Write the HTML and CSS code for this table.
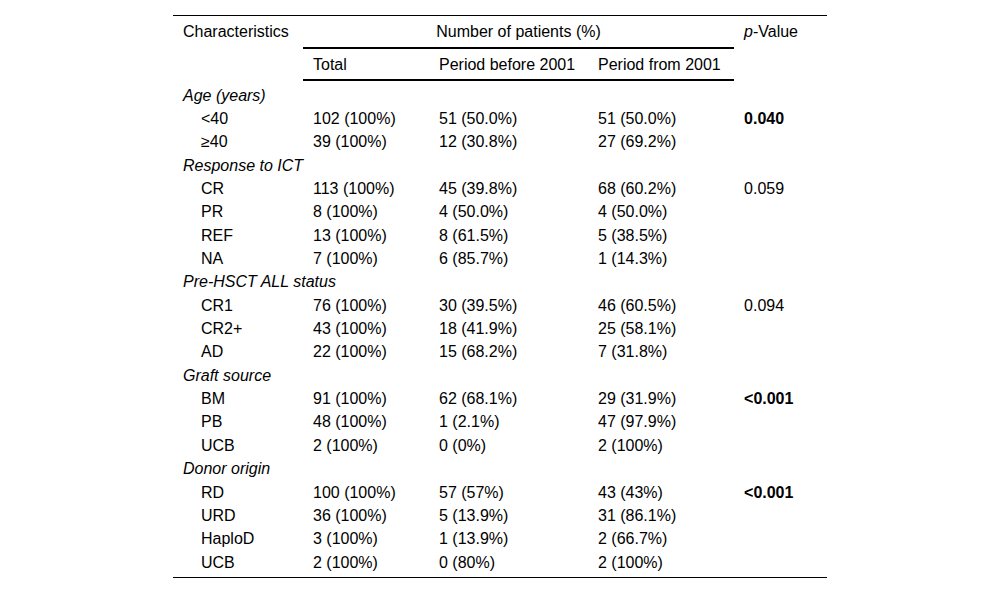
FILE: index.html
```html
<!DOCTYPE html>
<html>
<head>
<meta charset="utf-8">
<link rel="stylesheet" href="styles.css">
</head>
<body>
<div class="wrap">
<table class="tbl">
<colgroup>
<col class="c1"><col class="c2"><col class="c3"><col class="c4"><col class="c5">
</colgroup>
<thead>
<tr class="h1">
<th rowspan="2" class="top">Characteristics</th>
<th colspan="3" class="span">Number of patients (%)</th>
<th rowspan="2" class="top"><i>p</i>-Value</th>
</tr>
<tr class="h2">
<th>Total</th><th>Period before 2001</th><th>Period from 2001</th>
</tr>
</thead>
<tbody>
<tr class="first"><td class="grp" colspan="5">Age (years)</td></tr>
<tr><td class="ind">&lt;40</td><td>102 (100%)</td><td>51 (50.0%)</td><td>51 (50.0%)</td><td><b>0.040</b></td></tr>
<tr><td class="ind">≥40</td><td>39 (100%)</td><td>12 (30.8%)</td><td>27 (69.2%)</td><td></td></tr>
<tr><td class="grp" colspan="5">Response to ICT</td></tr>
<tr><td class="ind">CR</td><td>113 (100%)</td><td>45 (39.8%)</td><td>68 (60.2%)</td><td>0.059</td></tr>
<tr><td class="ind">PR</td><td>8 (100%)</td><td>4 (50.0%)</td><td>4 (50.0%)</td><td></td></tr>
<tr><td class="ind">REF</td><td>13 (100%)</td><td>8 (61.5%)</td><td>5 (38.5%)</td><td></td></tr>
<tr><td class="ind">NA</td><td>7 (100%)</td><td>6 (85.7%)</td><td>1 (14.3%)</td><td></td></tr>
<tr><td class="grp" colspan="5">Pre-HSCT ALL status</td></tr>
<tr><td class="ind">CR1</td><td>76 (100%)</td><td>30 (39.5%)</td><td>46 (60.5%)</td><td>0.094</td></tr>
<tr><td class="ind">CR2+</td><td>43 (100%)</td><td>18 (41.9%)</td><td>25 (58.1%)</td><td></td></tr>
<tr><td class="ind">AD</td><td>22 (100%)</td><td>15 (68.2%)</td><td>7 (31.8%)</td><td></td></tr>
<tr><td class="grp" colspan="5">Graft source</td></tr>
<tr><td class="ind">BM</td><td>91 (100%)</td><td>62 (68.1%)</td><td>29 (31.9%)</td><td><b>&lt;0.001</b></td></tr>
<tr><td class="ind">PB</td><td>48 (100%)</td><td>1 (2.1%)</td><td>47 (97.9%)</td><td></td></tr>
<tr><td class="ind">UCB</td><td>2 (100%)</td><td>0 (0%)</td><td>2 (100%)</td><td></td></tr>
<tr><td class="grp" colspan="5">Donor origin</td></tr>
<tr><td class="ind">RD</td><td>100 (100%)</td><td>57 (57%)</td><td>43 (43%)</td><td><b>&lt;0.001</b></td></tr>
<tr><td class="ind">URD</td><td>36 (100%)</td><td>5 (13.9%)</td><td>31 (86.1%)</td><td></td></tr>
<tr><td class="ind">HaploD</td><td>3 (100%)</td><td>1 (13.9%)</td><td>2 (66.7%)</td><td></td></tr>
<tr class="last"><td class="ind">UCB</td><td>2 (100%)</td><td>0 (80%)</td><td>2 (100%)</td><td></td></tr>
</tbody>
</table>
</div>
</body>
</html>
```
FILE: styles.css
```css
html, body {
  margin: 0;
  padding: 0;
  background: #fff;
}
body {
  font-family: "Liberation Sans", Arial, sans-serif;
  font-size: 16px;
  color: #000;
}
.wrap {
  padding-top: 15px;
  display: flex;
  justify-content: flex-start;
  padding-left: 173px;
}
.tbl {
  border-collapse: collapse;
  table-layout: fixed;
  width: 654px;
  border-top: 1px solid #000;
  border-bottom: 1px solid #000;
}
.c1 { width: 130px; }
.c2 { width: 126px; }
.c3 { width: 159px; }
.c4 { width: 146px; }
.c5 { width: 93px; }
th {
  font-weight: normal;
  text-align: left;
  padding: 0 0 0 10px;
  white-space: nowrap;
  line-height: 16px;
}
.h1 th {
  height: 31px;
  vertical-align: middle;
}
.h1 th.top {
  vertical-align: top;
  padding-top: 8px;
}
.h1 th.span {
  text-align: center;
  padding: 0;
  border-bottom: 2px solid #000;
}
.h2 th {
  height: 28px;
  padding-top: 2px;
  border-bottom: 2px solid #000;
  vertical-align: middle;
}
td {
  padding: 0 0 0 10px;
  height: 23.35px;
  line-height: 16px;
  vertical-align: middle;
  white-space: nowrap;
}
td.grp {
  font-style: italic;
}
td.ind {
  padding-left: 28px;
}
tr.first td {
  padding-top: 3px;
}
tr.last td {
  padding-bottom: 3px;
}
b { font-weight: bold; }
```
